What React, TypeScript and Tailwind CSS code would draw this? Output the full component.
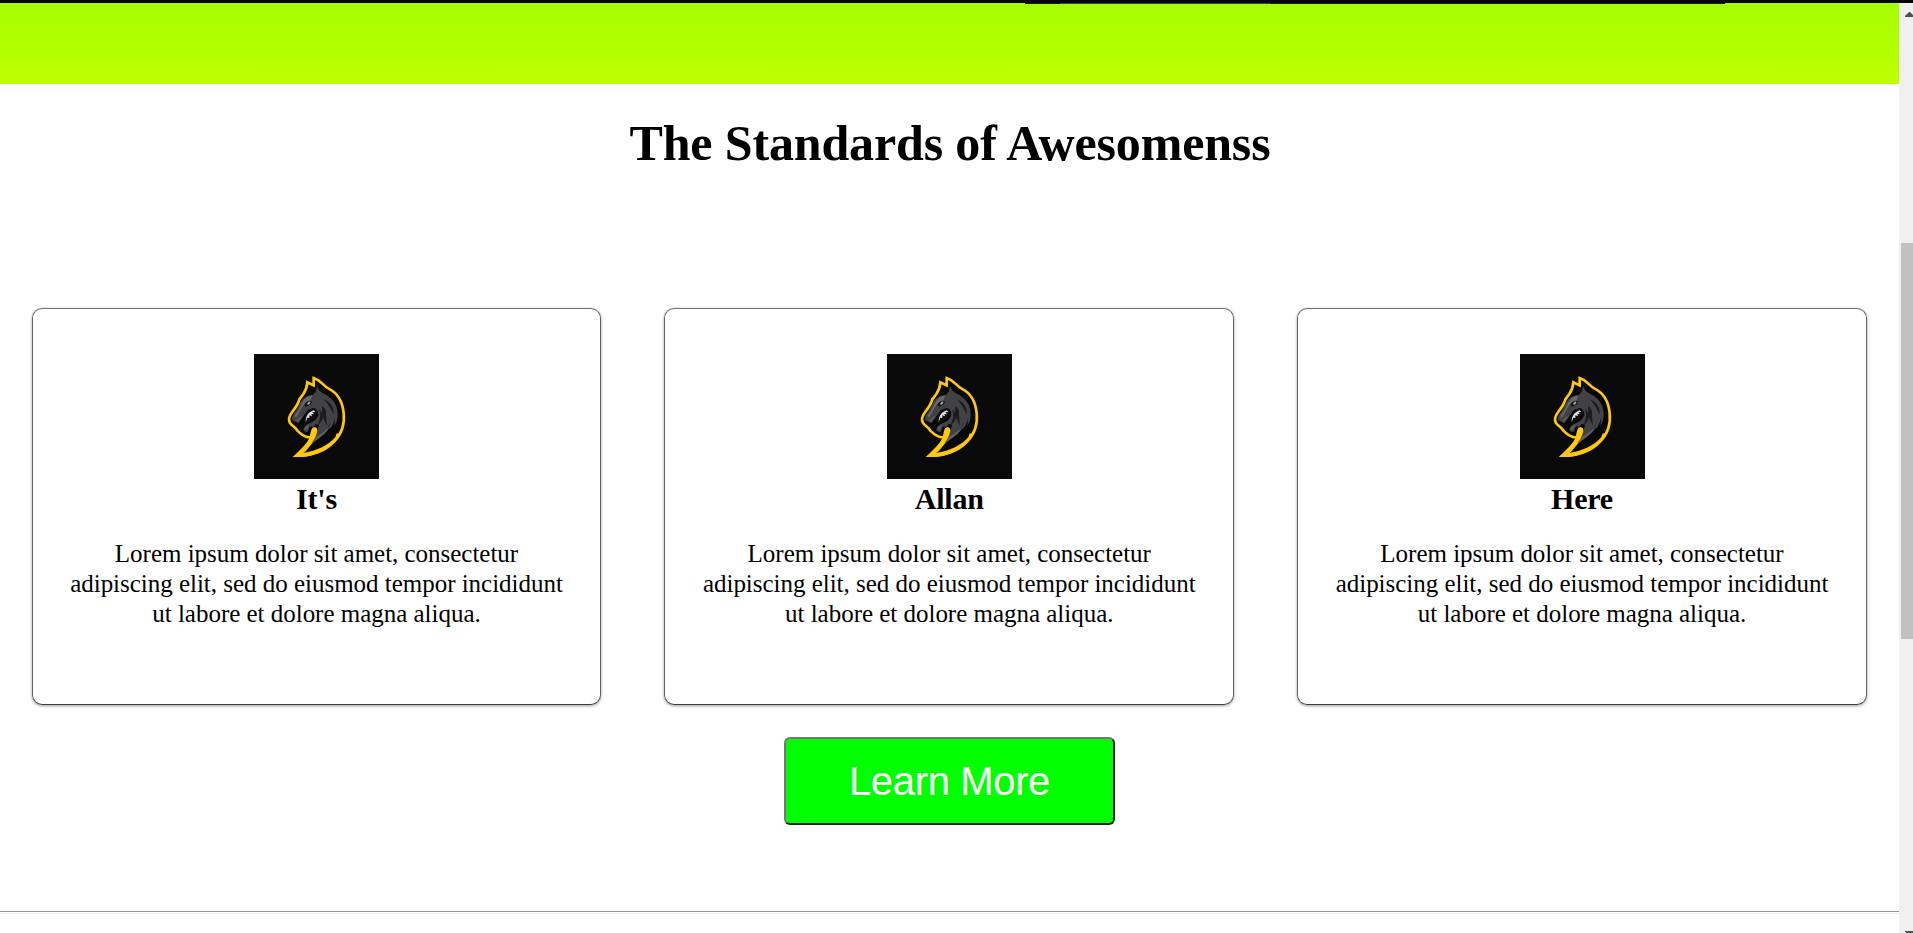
const cards = ["It's", "Allan", "Here"];

function Logo() {
  return (
    <svg viewBox="12 12 375 375" className="block size-[125px] shrink-0 bg-[#090909]">
      <path
        fill="#070707"
        stroke="#ffc80a"
        strokeWidth="8"
        strokeLinejoin="miter"
        d="M191 84 V106 L172 97 C171 110 169 119 160 132 L148 148 C144 165 134 175 125 188 C117 199 115 211 120 219 C127 229 137 232 142 242 C150 250 158 257 169 260 Q178 263 184 261 C190 250 186 240 192 237 Q199 235 198 245 C197 262 181 281 164 301 L142 317 C187 319 228 301 253 274 C276 250 284 218 281 190 C278 157 264 130 236 116 C219 108 215 91 191 84 Z"
      />
      <path
        fill="#ffc80a"
        d="M180 259 C182 241 187 231 195 232 Q204 236 202 248 C200 267 181 286 158 309 C203 303 235 285 256 262 L260 250 L268 251 C247 295 196 325 128 321 C149 302 174 279 180 259 Z"
      />
      <path
        fill="#424245"
        d="M202 106 C203 119 211 126 222 131 C247 143 261 162 263 189 C264 205 260 218 253 228 L255 203 C252 218 247 228 239 238 L242 216 C235 240 216 257 183 285 C196 267 202 247 207 224 L197 222 L187 234 C185 222 175 232 175 244 Q167 249 160 241 C161 229 168 225 179 220 C193 215 200 207 205 196 C206 184 200 176 188 177 L174 179 L157 203 L145 220 L126 211 L127 198 C140 182 145 166 155 151 C163 141 176 134 188 135 L197 125 Z"
      />
      <path fill="#68686c" d="M187 136 L171 141 C158 151 153 167 144 183 L132 199 L139 202 C149 188 152 172 166 160 L180 155 Z" />
      <path fill="#606064" d="M249 210 C240 235 219 249 198 260 L184 280 C213 262 240 244 249 210 Z" />
      <path fill="#58585b" d="M153 199 L138 211 L144 216 L157 201 Z M178 222 L165 231 L163 240 L173 239 Z" />
      <path
        fill="#1b1b1d"
        d="M222 148 C237 154 246 164 250 178 L251 195 C244 176 234 162 222 148 Z M217 168 C227 176 229 186 228 195 L231 228 L219 202 C216 214 210 221 203 225 C212 205 213 190 207 178 C212 181 215 187 216 193 Z"
      />
      <path fill="#101011" d="M164 219 C160 195 174 178 190 174 Q201 174 202 185 C199 201 182 213 164 221 Z M163 164 C170 152 180 149 186 156 L181 164 L167 170 Z" />
      <path
        fill="#dededf"
        d="M167 216 C167 200 173 188 191 181 L196 186 L187 187 L192 193 L184 192 L186 199 L178 196 L178 204 L172 203 Z"
      />
      <path fill="#a5a5a7" d="M170 163 L177 154 L182 157 L177 164 Z" />
    </svg>
  );
}

function Card({ title }: { title: string }) {
  return (
    <article className="flex h-[397px] flex-1 flex-col items-center rounded-[10px] border border-[#626262] border-t-[#707070] border-b-[#404040] pt-[45px] text-center shadow-[0_1px_3px_rgba(0,0,0,0.4)]">
      <Logo />
      <h2 className="mt-[2px] text-[30px] leading-[36px] font-bold tracking-[-0.2px]">{title}</h2>
      <p className="mt-[22px] text-[25px] leading-[30px] tracking-[-0.02px]">
        Lorem ipsum dolor sit amet, consectetur
        <br />
        adipiscing elit, sed do eiusmod tempor incididunt
        <br />
        ut labore et dolore magna aliqua.
      </p>
    </article>
  );
}

function Scrollbar() {
  return (
    <aside className="flex h-full w-[14px] shrink-0 flex-col items-end overflow-hidden bg-[#f0f0f0]">
      <svg viewBox="0 0 8 5" className="mt-[9px] h-[5px] w-[8px] shrink-0">
        <path fill="#505050" d="M0 5V4L4 0h1l3 3v2Z" />
      </svg>
      <div className="mt-[226px] h-[396px] w-[12px] shrink-0 bg-[#c1c1c1]" />
      <svg viewBox="0 0 8 2" className="mt-auto h-[2px] w-[8px] shrink-0">
        <path fill="#505050" d="M0 0h8v2H1V1H0Z" />
      </svg>
    </aside>
  );
}

export default function App() {
  return (
    <div className="flex h-[933px] w-[1913px] flex-col overflow-hidden bg-white font-['Liberation_Serif','Times_New_Roman',serif] text-black">
      <div className="h-[3px] shrink-0 bg-[#050505]" />
      <div className="flex min-h-0 flex-1">
        <main className="flex flex-1 flex-col">
          <div className="flex h-[81px] shrink-0 flex-col items-start bg-gradient-to-b from-[#a4ff00] to-[#bfff00]">
            <div className="ml-[1025px] flex h-px w-[700px] bg-[#0c1820]">
              <div className="ml-[35px] w-[210px] bg-[#1c4a78]" />
            </div>
          </div>
          <h1 className="mt-[30px] pl-px text-center text-[50px] leading-[58px] font-bold tracking-[-0.15px]">
            The Standards of Awesomenss
          </h1>
          <section className="mt-[136px] flex gap-[63px] pr-[32.1px] pl-[31.65px]">
            {cards.map((title) => (
              <Card key={title} title={title} />
            ))}
          </section>
          <button className="mt-8 h-[88px] w-[331px] shrink-0 self-center rounded-[6px] border-2 border-t-[#767676] border-r-[#212121] border-b-[#212121] border-l-[#767676] bg-[#00ff00] pb-px font-['Liberation_Sans',Arial,sans-serif] text-[40px] leading-none tracking-[-0.35px] text-white">
            Learn More
          </button>
          <hr className="mt-[86px] h-[3px] border-0 border-t border-b border-t-[#9a9a9a] border-b-[#eeeeee]" />
        </main>
        <Scrollbar />
      </div>
    </div>
  );
}
